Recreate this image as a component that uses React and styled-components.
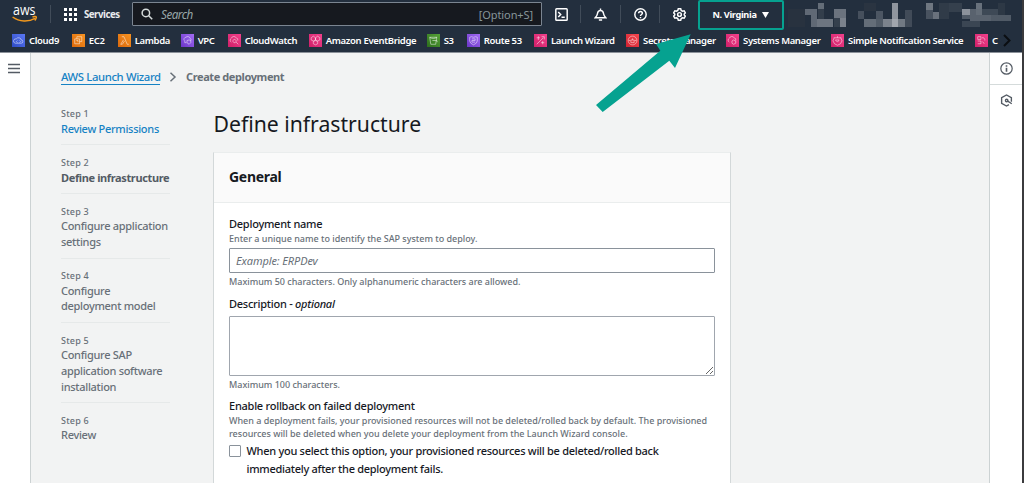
import React from "react";
import styled, { createGlobalStyle, css } from "styled-components";

const Global = createGlobalStyle`
  * { box-sizing: border-box; }
  body { margin: 0; font-family: "Noto Sans", "Open Sans", sans-serif; color: #16191f; background: #f2f3f3; overflow: hidden; }
`;

const Page = styled.div`
  position: relative;
  width: 1024px;
  height: 483px;
  display: flex;
  flex-direction: column;
  background: #f2f3f3;
  border-right: 2px solid #3b3b3d;
  overflow: hidden;
`;
const Header = styled.header`
  height: 52.5px;
  flex: none;
  background: #232f3e;
  border-bottom: 1px solid #8b9199;
  color: #fff;
`;
const TopRow = styled.div`
  height: 28px;
  display: flex;
  align-items: center;
  padding-left: 12px;
`;
const Logo = styled.svg`
  width: 26px;
  height: 18px;
  flex: none;
  overflow: visible;
`;
const Rule = styled.span`
  width: 1px;
  height: 18px;
  flex: none;
  background: #414c59;
  margin: 0 ${(p) => p.$right || 0}px 0 ${(p) => p.$left || 0}px;
`;
const Services = styled.div`
  width: 68px;
  display: flex;
  align-items: center;
  gap: 7px;
  font-size: 9.7px;
  font-weight: 700;
  color: #e9ebed;
  letter-spacing: -0.5px;
`;
const SearchBox = styled.div`
  width: 410px;
  height: 24px;
  flex: none;
  display: flex;
  align-items: center;
  padding: 0 8px;
  gap: 8px;
  background: #16191f;
  border: 1px solid #7b8591;
  border-radius: 1px;
  color: #98a6a8;
`;
const SearchHint = styled.span`
  flex: 1;
  font-size: 11.7px;
  font-style: italic;
  letter-spacing: -0.5px;
`;
const Shortcut = styled.span`
  font-size: 11px;
  letter-spacing: -0.1px;
  color: #87959a;
`;
const Slot = styled.span`
  width: ${(p) => p.$width}px;
  flex: none;
  display: flex;
  justify-content: center;
`;
const Region = styled.div`
  width: 86px;
  height: 30px;
  margin: 1px 4px 0 0;
  flex: none;
  display: flex;
  align-items: center;
  justify-content: center;
  gap: 5px;
  padding-right: 1px;
  border: 2.5px solid #06a290;
  border-radius: 2px;
  font-size: 9.2px;
  font-weight: 700;
  letter-spacing: -0.35px;
  white-space: nowrap;
`;
const Obscured = styled.svg`
  width: 225px;
  height: 24px;
  margin-top: 2px;
  flex: none;
`;
const Favorites = styled.nav`
  height: 24px;
  display: flex;
  align-items: center;
  padding: 1px 0 0 12px;
`;
const Favorite = styled.div`
  display: flex;
  align-items: center;
  gap: 4px;
  flex: none;
  width: ${(p) => p.$width}px;
  font-size: 9.5px;
  font-weight: 600;
  letter-spacing: -0.33px;
  white-space: nowrap;
`;
const Main = styled.div`
  flex: 1;
  display: flex;
  min-height: 0;
`;
const Rail = styled.aside`
  width: 30.5px;
  flex: none;
  background: #fff;
  border-right: 1px solid #ccd2d3;
  display: flex;
  justify-content: center;
  padding: 10px 2px 0 0;
`;
const Content = styled.main`
  flex: 1;
  padding: 16px 0 0 30.5px;
`;
const ToolRail = styled.aside`
  width: 33px;
  flex: none;
  background: #fff;
  border-left: 1px solid #ccd2d3;
`;
const Tool = styled.div`
  height: 32px;
  display: flex;
  align-items: center;
  justify-content: center;
  border-bottom: ${(p) => (p.$last ? "none" : "1px solid #d5dbdb")};
`;
const Crumbs = styled.div`
  height: 17px;
  display: flex;
  align-items: center;
  font-size: 11.3px;
  color: #687078;
  white-space: nowrap;
`;
const CrumbLink = styled.a`
  width: 99px;
  height: 16px;
  line-height: 15px;
  color: #1682c4;
  border-bottom: 1px solid #1682c4;
  font-weight: 500;
  letter-spacing: -0.37px;
`;
const CrumbCurrent = styled.span`
  height: 17px;
  line-height: 15px;
  font-weight: 700;
  font-size: 11px;
  letter-spacing: -0.4px;
`;
const Columns = styled.div`
  display: flex;
`;
const Steps = styled.ol`
  list-style: none;
  margin: 0;
  padding: 11px 0 0;
  width: 109px;
  margin-right: 43px;
  flex: none;
`;
const Step = styled.li`
  padding: 8.7px 0 7.8px;
  line-height: 15.65px;
  border-bottom: ${(p) => (p.$last ? "none" : "1px solid #e6e9e9")};
`;
const StepNumber = styled.div`
  height: 15.65px;
  line-height: 17.6px;
  font-size: 9px;
  font-weight: 500;
  letter-spacing: 0.2px;
  color: #687078;
`;
const stepLooks = {
  link: css`color: #1682c4;`,
  current: css`color: #545b64; font-weight: 700; letter-spacing: -0.37px;`,
  plain: css`color: #687078;`,
};
const StepName = styled.div`
  font-size: 11px;
  font-weight: 500;
  letter-spacing: -0.3px;
  white-space: nowrap;
  ${(p) => stepLooks[p.$look || "plain"]}
`;
const Form = styled.section`
  width: 517.5px;
`;
const Title = styled.h1`
  margin: 0;
  padding: 23px 0 0 0.5px;
  height: 66px;
  font-size: 21.2px;
  line-height: 30px;
  font-weight: 400;
  white-space: nowrap;
`;
const Card = styled.div`
  height: 360px;
  background: #fff;
  border: 1px solid #d3d8d9;
  border-top-color: #eaeded;
`;
const CardHeader = styled.h2`
  margin: 0;
  height: 50px;
  padding: 0 15px;
  background: #fafafa;
  border-bottom: 1px solid #eaeded;
  font-size: 14px;
  font-weight: 700;
  line-height: 47px;
  letter-spacing: -0.3px;
`;
const CardBody = styled.div`
  padding: 12px 15px;
`;
const Label = styled.div`
  height: 18px;
  line-height: 17px;
  font-size: 11px;
  font-weight: 500;
  letter-spacing: -0.25px;
  white-space: nowrap;
`;
const Hint = styled.div`
  line-height: 12.6px;
  font-size: 9px;
  font-weight: 500;
  color: #687078;
  letter-spacing: -0.01px;
  white-space: nowrap;
`;
const Field = styled.input`
  display: block;
  width: 485.5px;
  height: 25px;
  margin: 3px 0 3px;
  padding: 0 6px;
  border: 1px solid #8a929b;
  border-radius: 1px;
  background: #fff;
  font: italic 11px "Noto Sans", sans-serif;
  &::placeholder { color: #687078; letter-spacing: -0.1px; opacity: 1; }
`;
const Area = styled.textarea`
  display: block;
  width: 485.5px;
  height: 60px;
  margin: 3px 0;
  border: 1px solid #a0a6ae;
  border-radius: 1px;
  background: #fff;
  resize: both;
`;
const Group = styled.div`
  margin-top: 6px;
`;
const Choice = styled.div`
  display: flex;
  gap: 6px;
  margin-top: 2px;
  font-size: 11px;
  font-weight: 500;
  line-height: 17.3px;
  letter-spacing: -0.28px;
  white-space: nowrap;
`;
const Check = styled.span`
  width: 11.5px;
  height: 11.5px;
  margin-top: 3px;
  flex: none;
  border: 1px solid #8a929b;
  border-radius: 1px;
`;
const Arrow = styled.svg`
  position: absolute;
  left: 594px;
  top: 32px;
  width: 100px;
  height: 82px;
`;

const Line = ({ size = 13, children, ...rest }) => (
  <svg width={size} height={size} viewBox="0 0 16 16" fill="none" stroke="#fff" strokeWidth="1.8" {...rest}>{children}</svg>
);

const tints = {
  blue: ["#2e4bc4", "#5a78f5"],
  orange: ["#d9680c", "#f79321"],
  purple: ["#6a35c8", "#a26cf4"],
  pink: ["#cf1f68", "#f3418c"],
  green: ["#2c6e1c", "#57a238"],
  red: ["#cf2231", "#f7484f"],
};
const glyphs = {
  cloud: "M6 17h11a3 3 0 0 0 0-6 5 5 0 0 0-9-2 4 4 0 0 0-2 8zM10 12l-2 2 2 2M14 12l2 2-2 2",
  chip: "M5 9h9v9H5zM9 9V5h9v9h-4M8 12h3v3",
  lambda: "M7 5h4l6 14h3M10 11l-5 8h3l4-6",
  vpc: "M6 12a4 4 0 0 1 3-6 5 5 0 0 1 8 2 3 3 0 0 1 1 4M11 12l4-1 3 1v4l-3 3-4-3zM7 12v4h3",
  watch: "M6 15a4 4 0 0 1 0-7 5 5 0 0 1 9-1 4 4 0 0 1 3 5M12 10a3 3 0 1 0 .1 0M15 15l4 4",
  bridge: "M8 4l4 3v4l-4 2-4-2V7zM16 4l4 3v4l-4 2-4-2V7zM12 12l4 2v4l-4 2-4-2v-4z",
  bucket: "M5 6h13l-2 13H7zM5 6c3 3 10 3 13 0M10 12h8l1 3",
  route: "M5 6l3-1 4 1 4-1 3 1v7l-2 4-5 3-5-3-2-4zM9 9h6v3h-6v3h6",
  wizard: "M5 19L17 7M14 5h5v5M5 7h6M8 4v7M13 16h6M16 13v6",
  secret: "M12 4a8 8 0 1 0 .1 0M12 8v3M9 11h6v5H9zM5 12h3M16 12h3",
  systems: "M6 15a4 4 0 0 1 0-7 5 5 0 0 1 9-1 4 4 0 0 1 3 5M14 11l4 2v4l-4 2-3-2v-4z",
  sns: "M6 7a8 8 0 1 0 12 0M5 7h14M8 11h7l-3 4zM12 4v3",
  console: "M5 5h6v5H5zM5 13h6v5H5M13 7a4 4 0 0 1 5 5M14 14l3 4",
};
const ServiceIcon = ({ tint, glyph }) => (
  <svg width="13" height="13" viewBox="0 0 24 24">
    <defs>
      <linearGradient id={`g-${glyph}`} x1="0" y1="1" x2="1" y2="0">
        <stop offset="0" stopColor={tints[tint][0]} />
        <stop offset="1" stopColor={tints[tint][1]} />
      </linearGradient>
    </defs>
    <rect width="24" height="24" fill={`url(#g-${glyph})`} />
    <path d={glyphs[glyph]} fill="none" stroke="#fff" strokeOpacity=".75" strokeWidth="1.2" />
  </svg>
);

const favorites = [
  ["Cloud9", "blue", "cloud", 59.7],
  ["EC2", "orange", "chip", 46],
  ["Lambda", "orange", "lambda", 63],
  ["VPC", "purple", "vpc", 47],
  ["CloudWatch", "pink", "watch", 81],
  ["Amazon EventBridge", "pink", "bridge", 118],
  ["S3", "green", "bucket", 40],
  ["Route 53", "purple", "route", 67.3],
  ["Launch Wizard", "pink", "wizard", 92],
  ["Secrets Manager", "red", "secret", 100],
  ["Systems Manager", "pink", "systems", 105],
  ["Simple Notification Service", "pink", "sns", 144],
  ["C", "pink", "console", 28.5],
];

const steps = [
  [["Review Permissions"], "link"],
  [["Define infrastructure"], "current"],
  [["Configure application", "settings"]],
  [["Configure", "deployment model"]],
  [["Configure SAP", "application software", "installation"]],
  [["Review"]],
];

/* x, y, width, height, fill of each block in the obscured account name */
const blocks = [
  [0, 6, 17, 18, "#28323f"], [17, 6, 12, 6, "#606975"], [23, 12, 6, 12, "#606975"], [29, 16, 16, 8, "#6d7580"],
  [30, 0, 6, 6, "#646d78"], [30, 6, 6, 10, "#333e4b"], [46, 6, 12, 9, "#6b737e"], [52, 15, 6, 9, "#7b828c"], [46, 15, 6, 9, "#35404d"],
  [70, 8, 6, 8, "#46505d"], [76, 0, 12, 8, "#2a3441"], [76, 16, 12, 8, "#646d78"], [88, 8, 7, 8, "#4c5663"], [88, 16, 7, 8, "#525c68"],
  [95, 16, 9, 8, "#7c838d"], [104, 0, 6, 16, "#8f959e"], [104, 16, 6, 8, "#a1a6ae"], [110, 16, 7, 8, "#717983"], [117, 7, 7, 17, "#414b58"],
  [138, 0, 7, 7, "#6f7781"], [138, 7, 7, 9, "#48525f"], [145, 9, 6, 7, "#69717c"], [151, 0, 10, 16, "#303b48"], [161, 0, 13, 9, "#35404d"],
  [174, 6, 8, 6, "#8c929b"], [174, 12, 8, 4, "#505a66"], [182, 6, 6, 6, "#59626e"], [188, 0, 6, 6, "#68717c"], [188, 6, 6, 6, "#646d78"],
  [182, 12, 21, 6, "#59626e"], [174, 18, 18, 6, "#3b4653"], [194, 6, 16, 6, "#3e4956"], [203, 12, 20, 6, "#505a66"], [210, 0, 7, 12, "#2d3845"],
];

export default function App() {
  return (
    <>
      <Global />
      <Page>
        <Header>
          <TopRow>
            <Logo viewBox="0 0 26 18">
              <text x="1" y="10" fontFamily="Open Sans, sans-serif" fontSize="14" fontWeight="500" fill="#fff" textLength="22.5" lengthAdjust="spacingAndGlyphs">aws</text>
              <path d="M.6 12c7 5 16 5 22.400 1.300M20.500 12c2-.7 4.200-.5 3.800.5-.1 1-.8 2.300-1.500 3" fill="none" stroke="#f59a1d" strokeWidth="1.500" />
            </Logo>
            <Rule $left={12} $right={13} />
            <Services>
              <svg width="13" height="13" viewBox="0 0 13 13" fill="#fff">
                {[0, 5, 10].map((y) => [0, 5, 10].map((x) => <rect key={`${x}${y}`} x={x} y={y} width="3" height="3" />))}
              </svg>
              Services
            </Services>
            <SearchBox>
              <Line size={12} stroke="#d5dbdb" strokeWidth="2"><circle cx="6.5" cy="6.5" r="5" /><path d="M10 10l5 5" /></Line>
              <SearchHint>Search</SearchHint>
              <Shortcut>[Option+S]</Shortcut>
            </SearchBox>
            <Slot $width={38}><Line><rect x="1" y="1" width="14" height="14" rx="1" /><path d="M4 5l3 3-3 3M8 11.500h4" /></Line></Slot>
            <Rule />
            <Slot $width={39}><Line><path d="M8 .5v2.500M1.500 12C4 9.500 4 8.500 4.300 6.700 4.700 4 6.300 3 8 3s3.300 1 3.700 3.700C12 8.500 12 9.500 14.500 12zM6 14.800h4" /></Line></Slot>
            <Rule />
            <Slot $width={38}><Line><circle cx="8" cy="8" r="7" /><path d="M5.700 6.500c0-3 4.600-3 4.600 0C10.300 8 8 8 8 9.700M8 11v1.600" /></Line></Slot>
            <Rule />
            <Slot $width={38}><Line><path d="M6.500 1h3l.6 2 1.600.9 2-.5 1.500 2.600L13.800 7.500v1L15.200 10l-1.500 2.600-2-.5-1.600.9-.6 2h-3l-.6-2-1.600-.9-2 .5L.800 10l1.400-1.500v-1L.800 6l1.500-2.600 2 .5L5.900 3z" /><circle cx="8" cy="8" r="2.300" /></Line></Slot>
            <Region>
              N. Virginia
              <svg width="7" height="6" viewBox="0 0 7 6"><path d="M0 0h7L3.500 6z" fill="#fff" /></svg>
            </Region>
            <Obscured viewBox="0 0 225 24" shapeRendering="crispEdges">
              {blocks.map(([x, y, w, h, f], i) => <rect key={i} x={x} y={y} width={w} height={h} fill={f} />)}
            </Obscured>
          </TopRow>
          <Favorites>
            {favorites.map(([name, tint, glyph, width]) => (
              <Favorite key={name} $width={width}><ServiceIcon tint={tint} glyph={glyph} />{name}</Favorite>
            ))}
            <svg width="8" height="13" viewBox="0 0 8 13"><path d="M1 1l5.500 5.500L1 12" fill="none" stroke="#0b0e12" strokeWidth="2" /></svg>
          </Favorites>
        </Header>
        <Main>
          <Rail>
            <svg width="12" height="11" viewBox="0 0 12 11"><path d="M0 1.500h12M0 5.500h12M0 9.500h12" stroke="#545b64" strokeWidth="1.300" /></svg>
          </Rail>
          <Content>
            <Crumbs>
              <CrumbLink>AWS Launch Wizard</CrumbLink>
              <svg width="26" height="10" viewBox="0 0 26 10"><path d="M10.500 .8l4.500 4.200-4.500 4.200" fill="none" stroke="#687078" strokeWidth="1.500" /></svg>
              <CrumbCurrent>Create deployment</CrumbCurrent>
            </Crumbs>
            <Columns>
              <Steps>
                {steps.map(([lines, look], i) => (
                  <Step key={i} $last={i === steps.length - 1}>
                    <StepNumber>Step {i + 1}</StepNumber>
                    {lines.map((line) => <StepName key={line} $look={look}>{line}</StepName>)}
                  </Step>
                ))}
              </Steps>
              <Form>
                <Title>Define infrastructure</Title>
                <Card>
                  <CardHeader>General</CardHeader>
                  <CardBody>
                    <Label>Deployment name</Label>
                    <Hint>Enter a unique name to identify the SAP system to deploy.</Hint>
                    <Field placeholder="Example: ERPDev" />
                    <Hint>Maximum 50 characters. Only alphanumeric characters are allowed.</Hint>
                    <Group>
                      <Label>Description - <i>optional</i></Label>
                      <Area />
                      <Hint>Maximum 100 characters.</Hint>
                    </Group>
                    <Group>
                      <Label>Enable rollback on failed deployment</Label>
                      <Hint>
                        When a deployment fails, your provisioned resources will not be deleted/rolled back by default. The provisioned<br />
                        resources will be deleted when you delete your deployment from the Launch Wizard console.
                      </Hint>
                    </Group>
                    <Choice>
                      <Check />
                      <span>When you select this option, your provisioned resources will be deleted/rolled back<br />immediately after the deployment fails.</span>
                    </Choice>
                  </CardBody>
                </Card>
              </Form>
            </Columns>
          </Content>
          <ToolRail>
            <Tool><Line stroke="#545b64" strokeWidth="1.500"><circle cx="8" cy="8" r="7" /><path d="M8 7v5M8 4v1.800" strokeWidth="2" /></Line></Tool>
            <Tool $last><Line stroke="#545b64" strokeWidth="1.700"><path d="M14 9.500V4.500L8 1.200 2 4.500v7l6 3.300 3-1.600M9 8.500l5.500 3.500" /><circle cx="8.200" cy="8" r="1.500" /></Line></Tool>
          </ToolRail>
        </Main>
        <Arrow viewBox="594 32 100 82"><path d="M690.700 34.300L656 44l4.300 6.700L596 105l6.700 7 66.600-51.300L675 68z" fill="#06a290" /></Arrow>
      </Page>
    </>
  );
}
